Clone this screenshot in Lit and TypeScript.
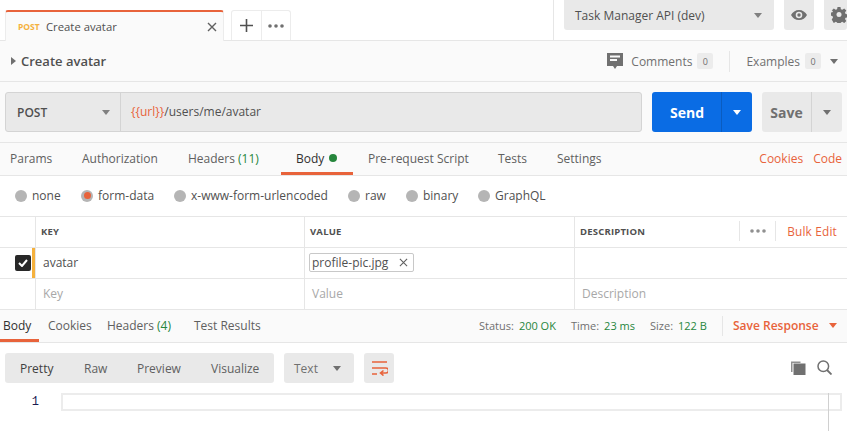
import { LitElement, html, css, svg } from "lit";
import { customElement } from "lit/decorators.js";

const caret = (c: string) => svg`<svg class="caret" width="8" height="5" viewBox="0 0 8 5"><path d="M0 0h8L4 5z" fill="${c}"/></svg>`;

@customElement("app-root")
export class AppRoot extends LitElement {
  static styles = css`
    :host { display: block; width: 847px; height: 431px; overflow: hidden; background: #fff; font-family: "Open Sans", sans-serif; font-size: 12px; color: #505050; position: relative; }
    * { box-sizing: border-box; }
    .flex { display: flex; align-items: center; }
    .top { height: 41px; border-bottom: 1px solid #e6e6e6; display: flex; background: #fff; }
    .tab { margin: 10px 0 -1px 5px; width: 219px; height: 31px; border: 1px solid #ececec; border-top: 2px solid #e8633b; border-bottom: 0; border-radius: 3px 3px 0 0; background: #fafafa; display: flex; align-items: center; padding: 0 6px 0 12px; font-size: 11.3px; color: #505050; }
    .tab .m { color: #f5b13d; font-weight: 700; font-size: 8.5px; width: 28px; }
    .tab .t { flex: 1; }
    .adds { margin: 10px 0 0 7px; width: 60px; height: 30px; border: 1px solid #ececec; border-bottom: 0; border-radius: 3px 3px 0 0; display: flex; }
    .adds > div { display: flex; align-items: center; justify-content: center; }
    .adds .p { width: 30px; border-right: 1px solid #ececec; }
    .adds .d { flex: 1; }
    .topright { margin-left: auto; width: 294px; border-left: 1px solid #e6e6e6; display: flex; padding-left: 10px; gap: 10px; }
    .env { width: 210px; height: 30px; background: #e9e9e9; border-radius: 0 0 3px 3px; display: flex; align-items: center; padding: 0 12px 0 11px; font-size: 12px; color: #505050; font-weight: 500; justify-content: space-between; }
    .ico { width: 30px; height: 30px; background: #e9e9e9; border-radius: 0 0 3px 3px; display: flex; align-items: center; justify-content: center; flex: none; }
    .ico.gear { width: 23px; justify-content: flex-start; padding-left: 7px; overflow: hidden; }
    .crumb { height: 41px; background: #fafafa; border-bottom: 1px solid #e6e6e6; display: flex; align-items: center; padding: 0 5px 0 11px; }
    .crumb b { font-size: 13px; font-weight: 600; color: #505050; margin-left: 5px; }
    .tri { width: 0; height: 0; border-left: 5px solid #707070; border-top: 4px solid transparent; border-bottom: 4px solid transparent; }
    .cr { margin-left: auto; display: flex; align-items: center; color: #707070; font-weight: 500; font-size: 12px; }
    .count { background: #ececec; width: 16px; height: 16px; display: inline-flex; align-items: center; justify-content: center; font-size: 9px; border-radius: 2px; margin-left: 5px; color: #707070; }
    .sep { width: 1px; height: 21px; background: #e6e6e6; margin: 0 16px; }
    .url { height: 61px; background: #fafafa; border-bottom: 1px solid #e6e6e6; display: flex; padding: 10px 5px; }
    .ubox { width: 637px; height: 40px; display: flex; background: #e9e9e9; border: 1px solid #d4d4d4; border-radius: 3px; }
    .method { width: 115px; flex: none; border-right: 1px solid #d4d4d4; display: flex; align-items: center; justify-content: space-between; padding: 0 10px 0 11px; font-weight: 600; font-size: 12px; color: #505050; }
    .uin { padding-left: 10px; display: flex; align-items: center; font-size: 12px; margin-top: -1px; }
    .or { color: #e8633b; }
    .send { margin-left: 10px; width: 100px; height: 40px; background: #0a6ce4; border-radius: 3px; display: flex; color: #fff; font-weight: 700; font-size: 14px; }
    .send span { width: 69px; display: flex; align-items: center; justify-content: center; padding-left: 1px; }
    .send i { flex: 1; border-left: 1px solid #0a5cc0; display: flex; align-items: center; justify-content: center; }
    .save { margin-left: 10px; width: 80px; height: 40px; background: #e9e9e9; border-radius: 3px; display: flex; color: #707070; font-weight: 700; font-size: 14px; }
    .save span { width: 49px; display: flex; align-items: center; justify-content: center; }
    .save i { flex: 1; border-left: 1px solid #d4d4d4; display: flex; align-items: center; justify-content: center; }
    .tabs { height: 33px; background: #fafafa; border-bottom: 1px solid #e6e6e6; display: flex; align-items: stretch; padding: 0 5px 0 0; position: relative; }
    .tabs > div { display: flex; align-items: center; color: #606060; font-size: 12px; padding-bottom: 2px; position: absolute; top: 0; bottom: 0; }
    .green { color: #26863c; }
    .body-on { color: #303030 !important; }
    .underline { position: absolute; height: 3px; background: #e8633b; bottom: 0; }
    .dot { width: 8px; height: 8px; background: #26863c; border-radius: 50%; display: inline-block; margin-left: 5px; }
    .tabs .links { right: 5px; color: #e8633b; gap: 10px; }
    .radios { height: 41px; border-bottom: 1px solid #e6e6e6; display: flex; align-items: center; padding: 0 0 1px 15px; font-size: 12px; color: #505050; }
    .r { display: flex; align-items: center; }
    .rc { width: 12px; height: 12px; border-radius: 50%; background: #b5b5b5; margin-right: 5px; display: flex; align-items: center; justify-content: center; }
    .rc i { width: 7px; height: 7px; background: #e8633b; border-radius: 50%; }
    .row { display: grid; grid-template-columns: 35px 269px 270px 1fr; height: 31px; border-bottom: 1px solid #e6e6e6; }
    .row > div { display: flex; align-items: center; padding: 0 0 2px 5px; border-left: 1px solid #e6e6e6; }
    .row > div:first-child { border-left: 0; padding: 0; position: relative; }
    .head { font-size: 9.5px; font-weight: 700; color: #505050; letter-spacing: 0.2px; }
    .cell-key { padding-left: 7px !important; }
    .ph { color: #a8a8a8; padding-left: 7px !important; }
    .mark { position: absolute; right: 0; top: 0; bottom: 0; width: 3px; background: #f5b13d; }
    .cb { width: 16px; height: 16px; background: #282828; border-radius: 2px; margin-left: 15px; display: flex; align-items: center; justify-content: center; }
    .file { border: 1px solid #c8c8c8; border-radius: 2px; height: 19px; width: 105px; margin-left: -1px; display: flex; align-items: center; padding: 0 5px 0 2px; justify-content: space-between; color: #505050; background: #fff; }
    .bulk { margin-left: auto; display: flex; align-items: center; color: #e8633b; }
    .bulk .more { width: 37px; height: 20px; border-left: 1px solid #e6e6e6; border-right: 1px solid #e6e6e6; display: flex; align-items: center; justify-content: center; margin-right: 11px; }
    .rtabs { height: 33px; background: #fafafa; border-bottom: 1px solid #e6e6e6; position: relative; display: flex; align-items: center; padding-bottom: 2px; color: #606060; }
    .rtabs .lab { position: absolute; top: 0; bottom: 2px; display: flex; align-items: center; }
    .meta { position: absolute; top: 0; bottom: 2px; display: flex; align-items: center; font-size: 11px; color: #707070; }
    .meta span { color: #26863c; margin-left: 5px; }
    .tools { height: 50px; padding: 10px 5px; display: flex; position: relative; }
    .group { width: 269px; height: 30px; background: #e9e9e9; border-radius: 3px; position: relative; }
    .group span { position: absolute; top: 0; bottom: 0; display: flex; align-items: center; color: #606060; }
    .text { margin-left: 10px; width: 70px; height: 30px; background: #e9e9e9; border-radius: 3px; display: flex; align-items: center; justify-content: space-between; padding: 0 13px 0 10px; color: #707070; }
    .wrap { margin-left: 10px; width: 30px; height: 30px; background: #e9e9e9; border-radius: 3px; display: flex; align-items: center; justify-content: center; }
    .ticons { margin-left: auto; display: flex; gap: 11px; align-items: center; padding: 0 10px 2px 0; }
    .line { display: flex; align-items: center; height: 18px; }
    .ln { width: 61px; padding-right: 22px; text-align: right; font-size: 12px; color: #1a1a50; font-family: "Liberation Mono", monospace; flex: none; }
    .lbox { width: 781px; height: 18px; border: 2px solid #ececec; flex: none; }
    .vline { position: absolute; left: 828px; top: 393px; bottom: 0; width: 1px; background: #d0d0d0; }
  `;

  render() {
    const x = (s: number, c: string, w = 1.4) => svg`<svg width="${s}" height="${s}" viewBox="0 0 10 10"><path d="M1 1l8 8M9 1l-8 8" stroke="${c}" stroke-width="${w}" fill="none"/></svg>`;
    const dots = (c: string) => svg`<svg width="16" height="4" viewBox="0 0 16 4"><circle cx="2" cy="2" r="1.8" fill="${c}"/><circle cx="8" cy="2" r="1.8" fill="${c}"/><circle cx="14" cy="2" r="1.8" fill="${c}"/></svg>`;
    return html`
      <div class="top">
        <div class="tab"><span class="m">POST</span><span class="t">Create avatar</span>${x(10, "#606060")}</div>
        <div class="adds">
          <div class="p"><svg width="13" height="13" viewBox="0 0 13 13"><path d="M6.5 0v13M0 6.5h13" stroke="#505050" stroke-width="1.6"/></svg></div>
          <div class="d">${dots("#707070")}</div>
        </div>
        <div class="topright">
          <div class="env"><span>Task Manager API (dev)</span>${caret("#808080")}</div>
          <div class="ico"><svg width="16" height="10" viewBox="0 0 16 10"><path d="M8 0C4.5 0 1.5 2 0 5c1.5 3 4.5 5 8 5s6.500-2 8-5c-1.500-3-4.500-5-8-5zm0 8.300A3.300 3.300 0 1 1 8 1.700a3.300 3.300 0 0 1 0 6.600z" fill="#707070"/><circle cx="8" cy="5" r="1.700" fill="#707070"/></svg></div>
          <div class="ico gear"><svg width="16" height="16" viewBox="0 0 16 16" style="flex:none"><path d="M6.500 0h3l.4 2.200 1.400.6L13.200 1.500l2.100 2.100-1.300 1.900.6 1.400 2.200.4v3l-2.200.4-.6 1.400 1.300 1.900-2.100 2.100-1.900-1.300-1.400.6-.4 2.200h-3l-.4-2.200-1.400-.6-1.900 1.300L.7 12.400 2 10.500l-.6-1.400L-.8 8.700v-3l2.200-.4.6-1.400L.7 3.600l2.100-2.100 1.900 1.300 1.400-.6z" fill="#707070"/><circle cx="8" cy="7.500" r="2.500" fill="#e9e9e9"/></svg></div>
        </div>
      </div>
      <div class="crumb">
        <div class="tri"></div><b>Create avatar</b>
        <div class="cr">
          <svg width="16" height="16" viewBox="0 0 16 16" style="margin-right:8px"><path d="M0 0h16v13h-6l-2 3-2-3H0z" fill="#707070"/><path d="M3 3.500h10M3 7h7" stroke="#fafafa" stroke-width="1.800"/></svg>
          Comments<span class="count">0</span>
          <div class="sep"></div>
          Examples<span class="count">0</span>
          <span style="margin:0 4px 0 9px;display:flex">${caret("#707070")}</span>
        </div>
      </div>
      <div class="url">
        <div class="ubox">
          <div class="method"><span>POST</span>${caret("#808080")}</div>
          <div class="uin"><span class="or">{{url}}</span>/users/me/avatar</div>
        </div>
        <div class="send"><span>Send</span><i>${caret("#fff")}</i></div>
        <div class="save"><span>Save</span><i>${caret("#707070")}</i></div>
      </div>
      <div class="tabs">
        <div style="left:10px">Params</div>
        <div style="left:82px">Authorization</div>
        <div style="left:188px">Headers&nbsp;<span class="green">(11)</span></div>
        <div class="body-on" style="left:296px">Body<i class="dot"></i></div>
        <div style="left:368px">Pre-request Script</div>
        <div style="left:498px">Tests</div>
        <div style="left:557px">Settings</div>
        <div class="links"><span>Cookies</span><span>Code</span></div>
        <i class="underline" style="left:281px;width:72px"></i>
      </div>
      <div class="radios">
        <div class="r" style="width:66px"><i class="rc"></i>none</div>
        <div class="r" style="width:93px"><i class="rc"><i></i></i>form-data</div>
        <div class="r" style="width:174px"><i class="rc"></i>x-www-form-urlencoded</div>
        <div class="r" style="width:58px"><i class="rc"></i>raw</div>
        <div class="r" style="width:72px"><i class="rc"></i>binary</div>
        <div class="r"><i class="rc"></i>GraphQL</div>
      </div>
      <div class="row head">
        <div></div><div>KEY</div><div>VALUE</div>
        <div>DESCRIPTION
          <div class="bulk" style="font-size:11.8px;font-weight:400">
            <div class="more">${dots("#909090")}</div>
            <span style="margin-right:10px">Bulk Edit</span>
          </div>
        </div>
      </div>
      <div class="row">
        <div><div class="cb"><svg width="10" height="8" viewBox="0 0 10 8"><path d="M1 4l3 3 5-6" stroke="#fff" stroke-width="2" fill="none"/></svg></div><i class="mark"></i></div>
        <div class="cell-key">avatar</div>
        <div><div class="file"><span>profile-pic.jpg</span>${x(9, "#606060", 1.2)}</div></div>
        <div></div>
      </div>
      <div class="row">
        <div></div>
        <div class="ph">Key</div>
        <div class="ph">Value</div>
        <div class="ph">Description</div>
      </div>
      <div class="rtabs">
        <div class="lab" style="left:3px;color:#303030">Body</div>
        <div class="lab" style="left:48px">Cookies</div>
        <div class="lab" style="left:107px">Headers&nbsp;<span class="green">(4)</span></div>
        <div class="lab" style="left:194px">Test Results</div>
        <i class="underline" style="left:0;width:39px"></i>
        <div class="meta" style="left:479px">Status:<span>200 OK</span></div>
        <div class="meta" style="left:571px">Time:<span>23 ms</span></div>
        <div class="meta" style="left:650px">Size:<span>122 B</span></div>
        <div class="meta" style="left:722px;height:20px;top:6px;width:1px;background:#e6e6e6"></div>
        <div class="lab" style="left:733px;color:#e8633b;font-weight:600">Save Response</div>
        <div class="lab" style="left:829px">${caret("#e8633b")}</div>
      </div>
      <div class="tools">
        <div class="group">
          <span style="left:15px;color:#404040">Pretty</span>
          <span style="left:79px">Raw</span>
          <span style="left:132px">Preview</span>
          <span style="left:206px">Visualize</span>
        </div>
        <div class="text"><span>Text</span>${caret("#707070")}</div>
        <div class="wrap"><svg width="17" height="15" viewBox="0 0 17 15"><path d="M1 1h15M1 7h14a2.500 2.500 0 0 1 0 5h-5M12.500 9.500L9.500 12l3 2.500M1 13h5" stroke="#e8633b" stroke-width="1.600" fill="none"/></svg></div>
        <div class="ticons">
          <svg width="15" height="15" viewBox="0 0 15 15"><path d="M0 1.500h9.500V3H1.500v9H0z" fill="#909090"/><rect x="2.500" y="3.500" width="12" height="11.500" fill="#707070"/></svg>
          <svg width="15" height="15" viewBox="0 0 15 15"><circle cx="6.300" cy="6.300" r="5.300" stroke="#707070" stroke-width="1.500" fill="none"/><path d="M10 10l4.500 4.500" stroke="#707070" stroke-width="1.800"/></svg>
        </div>
      </div>
      <div class="line"><div class="ln">1</div><div class="lbox"></div></div>
      <i class="vline"></i>
    `;
  }
}
